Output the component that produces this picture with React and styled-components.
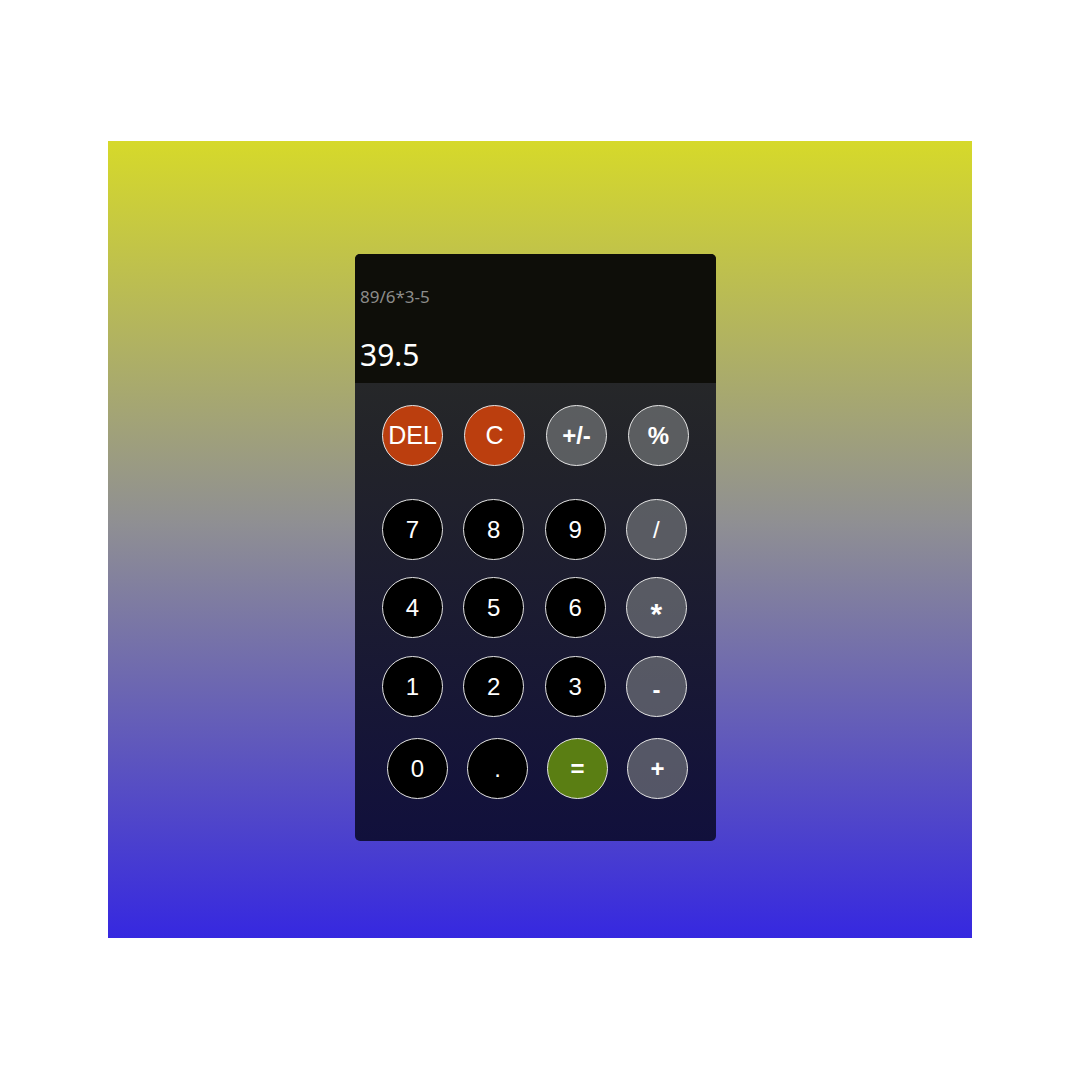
import React from 'react';
import styled, { createGlobalStyle } from 'styled-components';

const GlobalStyle = createGlobalStyle`
  html, body {
    margin: 0;
    padding: 0;
    background: #fff;
  }
`;

const Page = styled.div`
  padding: 141px 108px;
`;

const Backdrop = styled.div`
  width: 864px;
  height: 797px;
  box-sizing: border-box;
  padding: 113px 9px 0 0;
  display: flex;
  justify-content: center;
  align-items: flex-start;
  background: linear-gradient(180deg, #d6d92a 0%, #8f8f93 48%, #3628e0 100%);
`;

const Calculator = styled.div`
  width: 361px;
  height: 587px;
  border-radius: 5px;
  overflow: hidden;
  display: flex;
  flex-direction: column;
  background: linear-gradient(180deg, #2c2e27 0%, #22232a 35%, #11103c 100%);
`;

const Display = styled.div`
  height: 129px;
  box-sizing: border-box;
  padding: 33px 6px 0 5px;
  background: #0e0e09;
  font-family: 'Noto Sans', 'Open Sans', sans-serif;
`;

const Expression = styled.div`
  font-size: 17px;
  line-height: 20.4px;
  color: #8c8c8a;
`;

const Result = styled.div`
  margin-top: 30px;
  font-size: 30px;
  line-height: 36px;
  color: #fff;
`;

const Keypad = styled.div`
  flex: 1;
  padding: 22px 0 0 27px;
  display: flex;
  flex-direction: column;
`;

const Row = styled.div`
  display: flex;
  gap: ${p => p.$gap}px;
  padding-left: ${p => p.$indent || 0}px;
  margin-bottom: ${p => p.$below || 0}px;
`;

const tones = {
  digit: '#000',
  danger: '#bb3e0e',
  op: 'rgba(128, 131, 134, 0.6)',
  equals: '#5a7e13',
};

const bold = tone => tone === 'op' || tone === 'equals';

const Key = styled.button`
  width: 61px;
  height: 61px;
  flex: 0 0 61px;
  border-radius: 50%;
  border: 1px solid #e4e4e4;
  padding: 0;
  background: ${p => tones[p.$tone]};
  color: #fff;
  font-family: 'Liberation Sans', Arial, sans-serif;
  font-size: ${p => (p.$tone === 'danger' ? 25 : 24)}px;
  font-weight: ${p => (bold(p.$tone) && !p.$thin ? 700 : 400)};
  display: flex;
  align-items: center;
  justify-content: center;
  cursor: pointer;
`;

const Star = styled.span`
  font-size: 30px;
  line-height: 1;
  transform: translateY(6px);
`;

const Dash = styled.span`
  transform: translateY(3px);
`;

const rows = [
  { gap: 21, below: 33, keys: [['DEL', 'danger'], ['C', 'danger'], ['+/-', 'op'], ['%', 'op']] },
  { gap: 20.3, below: 17, keys: [['7', 'digit'], ['8', 'digit'], ['9', 'digit'], ['/', 'op']] },
  { gap: 20.3, below: 18, keys: [['4', 'digit'], ['5', 'digit'], ['6', 'digit'], ['*', 'op']] },
  { gap: 20.3, below: 21, keys: [['1', 'digit'], ['2', 'digit'], ['3', 'digit'], ['-', 'op']] },
  { gap: 19, indent: 5, keys: [['0', 'digit'], ['.', 'digit'], ['=', 'equals'], ['+', 'op']] },
];

const renderLabel = label => {
  if (label === '*') return <Star>*</Star>;
  if (label === '-') return <Dash>-</Dash>;
  return label;
};

export default function App() {
  return (
    <>
      <GlobalStyle />
      <Page>
        <Backdrop>
          <Calculator>
            <Display>
              <Expression>89/6*3-5</Expression>
              <Result>39.5</Result>
            </Display>
            <Keypad>
              {rows.map((row, i) => (
                <Row key={i} $gap={row.gap} $indent={row.indent} $below={row.below}>
                  {row.keys.map(([label, tone]) => (
                    <Key key={label} $tone={tone} $thin={label === '/'}>
                      {renderLabel(label)}
                    </Key>
                  ))}
                </Row>
              ))}
            </Keypad>
          </Calculator>
        </Backdrop>
      </Page>
    </>
  );
}
